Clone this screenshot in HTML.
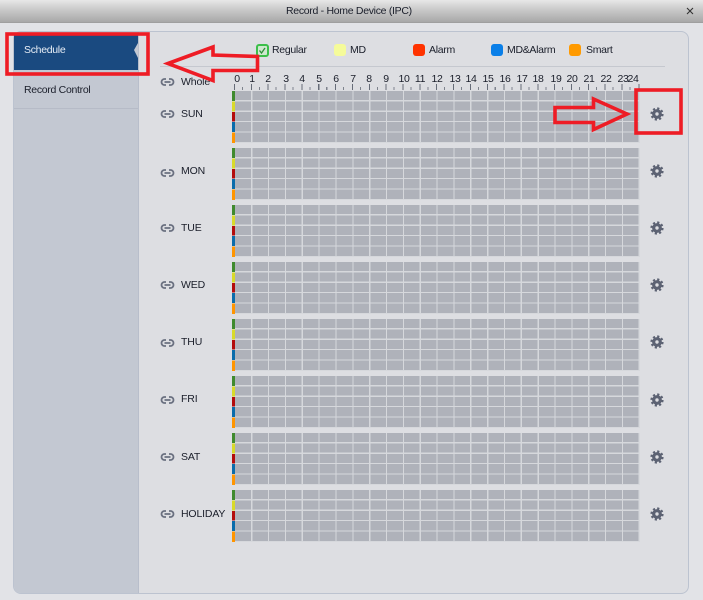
<!DOCTYPE html>
<html><head><meta charset="utf-8">
<style>
html,body{margin:0;padding:0;}
body{width:703px;height:600px;overflow:hidden;background:#e2e3e7;position:relative;font-family:"Liberation Sans",sans-serif;font-size:10.5px;letter-spacing:-.3px;color:#1a1e2a;}
#w{position:absolute;left:0;top:0;width:703px;height:600px;filter:blur(.3px);}
.a{position:absolute;white-space:nowrap;}
#title{left:0;top:0;width:703px;height:22px;background:linear-gradient(#e8e8e8,#cfcfcf 35%,#a8a8a8);border-bottom:1px solid #9f9f9f;}
#panel{left:13px;top:31px;width:674px;height:561px;background:#dddee2;border:1px solid #bcc3d0;border-radius:8px;overflow:hidden;}
#side{left:0;top:0;width:124px;height:561px;background:#c3c8d2;border-right:1px solid #b8becb;}
.sw{width:12px;height:12px;border-radius:3px;top:44px;}
.t{line-height:12px;}
.h{top:73px;width:20px;text-align:center;line-height:12px;}
.g{left:235px;width:405px;height:52px;background-color:#afb2ba;background-image:repeating-linear-gradient(90deg,transparent 0,transparent 15.65px,#d6d8dc 15.65px,#d6d8dc 16.85px),repeating-linear-gradient(180deg,transparent 0,transparent 9.2px,#d6d8dc 9.2px,#d6d8dc 10.4px);background-position:.5px 0;}
.s{left:232px;width:3px;height:52px;background:linear-gradient(#3f8a2e 0,#3f8a2e 19%,#e2e3e7 19%,#e2e3e7 20%,#d8da2a 20%,#d8da2a 39%,#e2e3e7 39%,#e2e3e7 40%,#b30c0c 40%,#b30c0c 59%,#e2e3e7 59%,#e2e3e7 60%,#0a6cab 60%,#0a6cab 79%,#e2e3e7 79%,#e2e3e7 80%,#ff9500 80%);}
.l{left:181px;line-height:13px;font-size:10.5px;letter-spacing:-.15px;}
.i{left:160px;width:15px;height:10px;}
.c{left:650px;width:14px;height:14px;}
</style></head>
<body><div id="w">
<div class="a" id="title"></div>
<div class="a t" style="left:286px;top:5px;font-size:10.5px;">Record - Home Device (IPC)</div>
<svg class="a" style="left:686px;top:7px" width="8" height="8" viewBox="0 0 8 8"><path d="M1 1L7 7M7 1L1 7" stroke="#333" stroke-width="1.100"/></svg>

<div class="a" id="panel"><div class="a" id="side"></div>
<div class="a" style="left:0;top:76px;width:124px;height:1px;background:#b6bbc7"></div></div>

<svg class="a" style="left:14px;top:33px" width="125" height="38" viewBox="0 0 125 38"><path d="M0 0H124V10L120 17L124 25V37H0Z" fill="#1a4a80"/></svg>
<div class="a t" style="left:24px;top:44px;color:#e8eef6;">Schedule</div>
<div class="a t" style="left:24px;top:84px;">Record Control</div>

<div class="a" style="left:160px;top:66px;width:505px;height:1px;background:#c5c8cf"></div>

<div class="a sw" style="left:256px;background:#cfe8cf;border:2px solid #3cbf4a;width:9px;height:9px;"></div>
<svg class="a" style="left:258px;top:46px" width="9" height="9" viewBox="0 0 9 9"><path d="M1.500 4.500L3.500 7L7 2" stroke="#2f8f3a" stroke-width="1.300" fill="none"/></svg>
<div class="a t" style="left:272px;top:44px;">Regular</div>
<div class="a sw" style="left:334px;background:#f5fb9a;"></div>
<div class="a t" style="left:350px;top:44px;">MD</div>
<div class="a sw" style="left:413px;background:#ff3300;"></div>
<div class="a t" style="left:429px;top:44px;">Alarm</div>
<div class="a sw" style="left:491px;background:#0a7fe8;"></div>
<div class="a t" style="left:507px;top:44px;">MD&amp;Alarm</div>
<div class="a sw" style="left:569px;background:#ff9a00;"></div>
<div class="a t" style="left:586px;top:44px;">Smart</div>

<div class="a h" style="left:227px">0</div><div class="a h" style="left:242px">1</div><div class="a h" style="left:258px">2</div><div class="a h" style="left:276px">3</div><div class="a h" style="left:292px">4</div><div class="a h" style="left:309px">5</div><div class="a h" style="left:326px">6</div><div class="a h" style="left:343px">7</div><div class="a h" style="left:359px">8</div><div class="a h" style="left:376px">9</div><div class="a h" style="left:394px">10</div><div class="a h" style="left:410px">11</div><div class="a h" style="left:427px">12</div><div class="a h" style="left:445px">13</div><div class="a h" style="left:461px">14</div><div class="a h" style="left:478px">15</div><div class="a h" style="left:495px">16</div><div class="a h" style="left:512px">17</div><div class="a h" style="left:528px">18</div><div class="a h" style="left:546px">19</div><div class="a h" style="left:562px">20</div><div class="a h" style="left:579px">21</div><div class="a h" style="left:596px">22</div><div class="a h" style="left:613px">23</div><div class="a h" style="left:623px">24</div>

<div class="a" style="left:234px;top:84px;width:407px;height:6px;background-image:repeating-linear-gradient(90deg,#666c78 0,#666c78 1px,transparent 1px,transparent 16.85px);"></div>
<div class="a" style="left:242.400px;top:87px;width:399px;height:3px;background-image:repeating-linear-gradient(90deg,#666c78 0,#666c78 1px,transparent 1px,transparent 16.85px);opacity:.8"></div>

<svg width="0" height="0" style="position:absolute"><defs>
<g id="gear"><circle cx="7" cy="7" r="3.300" fill="none" stroke="#5c6273" stroke-width="3.200"/><circle cx="7" cy="7" r="5.500" fill="none" stroke="#5c6273" stroke-width="2.200" stroke-dasharray="2.160 2.160"/></g>
<g id="link"><path d="M6 2H4.500A3 3 0 0 0 4.500 8H6M9 2H10.500A3 3 0 0 1 10.500 8H9M4.500 5H10.500" fill="none" stroke="#6a7080" stroke-width="1.800"/></g>
</defs></svg>

<svg class="a i" style="top:77px" viewBox="0 0 15 10"><use href="#link"/></svg>
<div class="a l" style="top:76px;">Whole</div>

<div class="a s" style="top:91px"></div><div class="a g" style="top:91px"></div>
<svg class="a i" style="top:109px" viewBox="0 0 15 10"><use href="#link"/></svg><div class="a l" style="top:108px">SUN</div>
<svg class="a c" style="top:107px" viewBox="0 0 14 14"><use href="#gear"/></svg>

<div class="a s" style="top:148px"></div><div class="a g" style="top:148px"></div>
<svg class="a i" style="top:168px" viewBox="0 0 15 10"><use href="#link"/></svg><div class="a l" style="top:165px">MON</div>
<svg class="a c" style="top:164px" viewBox="0 0 14 14"><use href="#gear"/></svg>

<div class="a s" style="top:205px"></div><div class="a g" style="top:205px"></div>
<svg class="a i" style="top:223px" viewBox="0 0 15 10"><use href="#link"/></svg><div class="a l" style="top:222px">TUE</div>
<svg class="a c" style="top:221px" viewBox="0 0 14 14"><use href="#gear"/></svg>

<div class="a s" style="top:262px"></div><div class="a g" style="top:262px"></div>
<svg class="a i" style="top:280px" viewBox="0 0 15 10"><use href="#link"/></svg><div class="a l" style="top:279px">WED</div>
<svg class="a c" style="top:278px" viewBox="0 0 14 14"><use href="#gear"/></svg>

<div class="a s" style="top:319px"></div><div class="a g" style="top:319px"></div>
<svg class="a i" style="top:338px" viewBox="0 0 15 10"><use href="#link"/></svg><div class="a l" style="top:336px">THU</div>
<svg class="a c" style="top:335px" viewBox="0 0 14 14"><use href="#gear"/></svg>

<div class="a s" style="top:376px"></div><div class="a g" style="top:376px"></div>
<svg class="a i" style="top:395px" viewBox="0 0 15 10"><use href="#link"/></svg><div class="a l" style="top:393px">FRI</div>
<svg class="a c" style="top:393px" viewBox="0 0 14 14"><use href="#gear"/></svg>

<div class="a s" style="top:433px"></div><div class="a g" style="top:433px"></div>
<svg class="a i" style="top:452px" viewBox="0 0 15 10"><use href="#link"/></svg><div class="a l" style="top:451px">SAT</div>
<svg class="a c" style="top:450px" viewBox="0 0 14 14"><use href="#gear"/></svg>

<div class="a s" style="top:490px"></div><div class="a g" style="top:490px"></div>
<svg class="a i" style="top:509px" viewBox="0 0 15 10"><use href="#link"/></svg><div class="a l" style="top:508px">HOLIDAY</div>
<svg class="a c" style="top:507px" viewBox="0 0 14 14"><use href="#gear"/></svg>

<svg class="a" style="left:0;top:0" width="703" height="600" viewBox="0 0 703 600" fill="none" stroke="#ee1c25" stroke-width="3.600" stroke-miterlimit="12">
<rect x="7" y="34" width="141" height="40"/>
<path d="M168 63.500L213 47V55L257.500 56.500V70.500H213V80.500Z"/>
<rect x="636" y="90" width="45" height="43"/>
<path d="M555 107.500H593.500V99L627 114L593.500 129.500V122.500H555Z"/>
</svg>
</div></body></html>
